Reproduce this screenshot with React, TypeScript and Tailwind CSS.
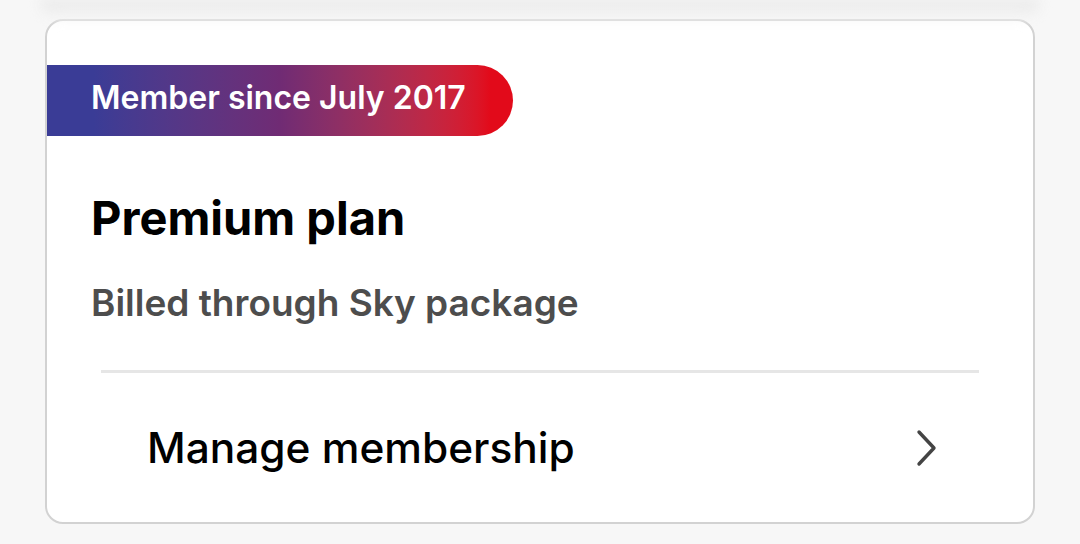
import React from "react";

export default function App() {
  return (
    <div
      className="w-[1080px] h-[544px] bg-[#f7f7f7] overflow-hidden flex flex-col"
      style={{ fontFamily: "Inter, 'Noto Sans', sans-serif" }}
    >
      <div className="h-[19px] shrink-0 mx-[40px] bg-gradient-to-b from-[#e6e6e6] to-[#f7f7f7] rounded-b-[20px] blur-[6px]" />
      <div className="mx-[45px] h-[505px] bg-white border-2 border-[#d2d2d2] rounded-[18px] flex flex-col overflow-hidden">
        <div className="mt-[44px] h-[71px] w-[466px] rounded-r-full bg-gradient-to-r from-[#3a3c96] from-10% via-[#702b74] via-50% to-[#e20a1a] to-95% flex items-center pl-[44px] pb-[6px] shrink-0">
          <span className="text-white text-[32px] leading-[40px] font-semibold">Member since July 2017</span>
        </div>
        <div className="pl-[44px] mt-[54px] text-[47px] leading-[56px] font-bold text-black">Premium plan</div>
        <div className="pl-[44px] mt-[35px] text-[37px] leading-[44px] font-semibold text-[#4d4d4d]">Billed through Sky package</div>
        <div className="mx-[54px] mt-[45px] h-[3px] bg-[#e6e6e6] shrink-0" />
        <div className="flex items-center justify-between pl-[100px] pr-[94px] mt-[50px]">
          <span className="text-[42.4px] leading-[50px] font-medium text-black">Manage membership</span>
          <svg width="24" height="38" viewBox="0 0 24 38" fill="none">
            <path d="M4 3 L19 19 L4 35" stroke="#444" strokeWidth="3.4" strokeLinecap="round" strokeLinejoin="round" />
          </svg>
        </div>
      </div>
    </div>
  );
}
